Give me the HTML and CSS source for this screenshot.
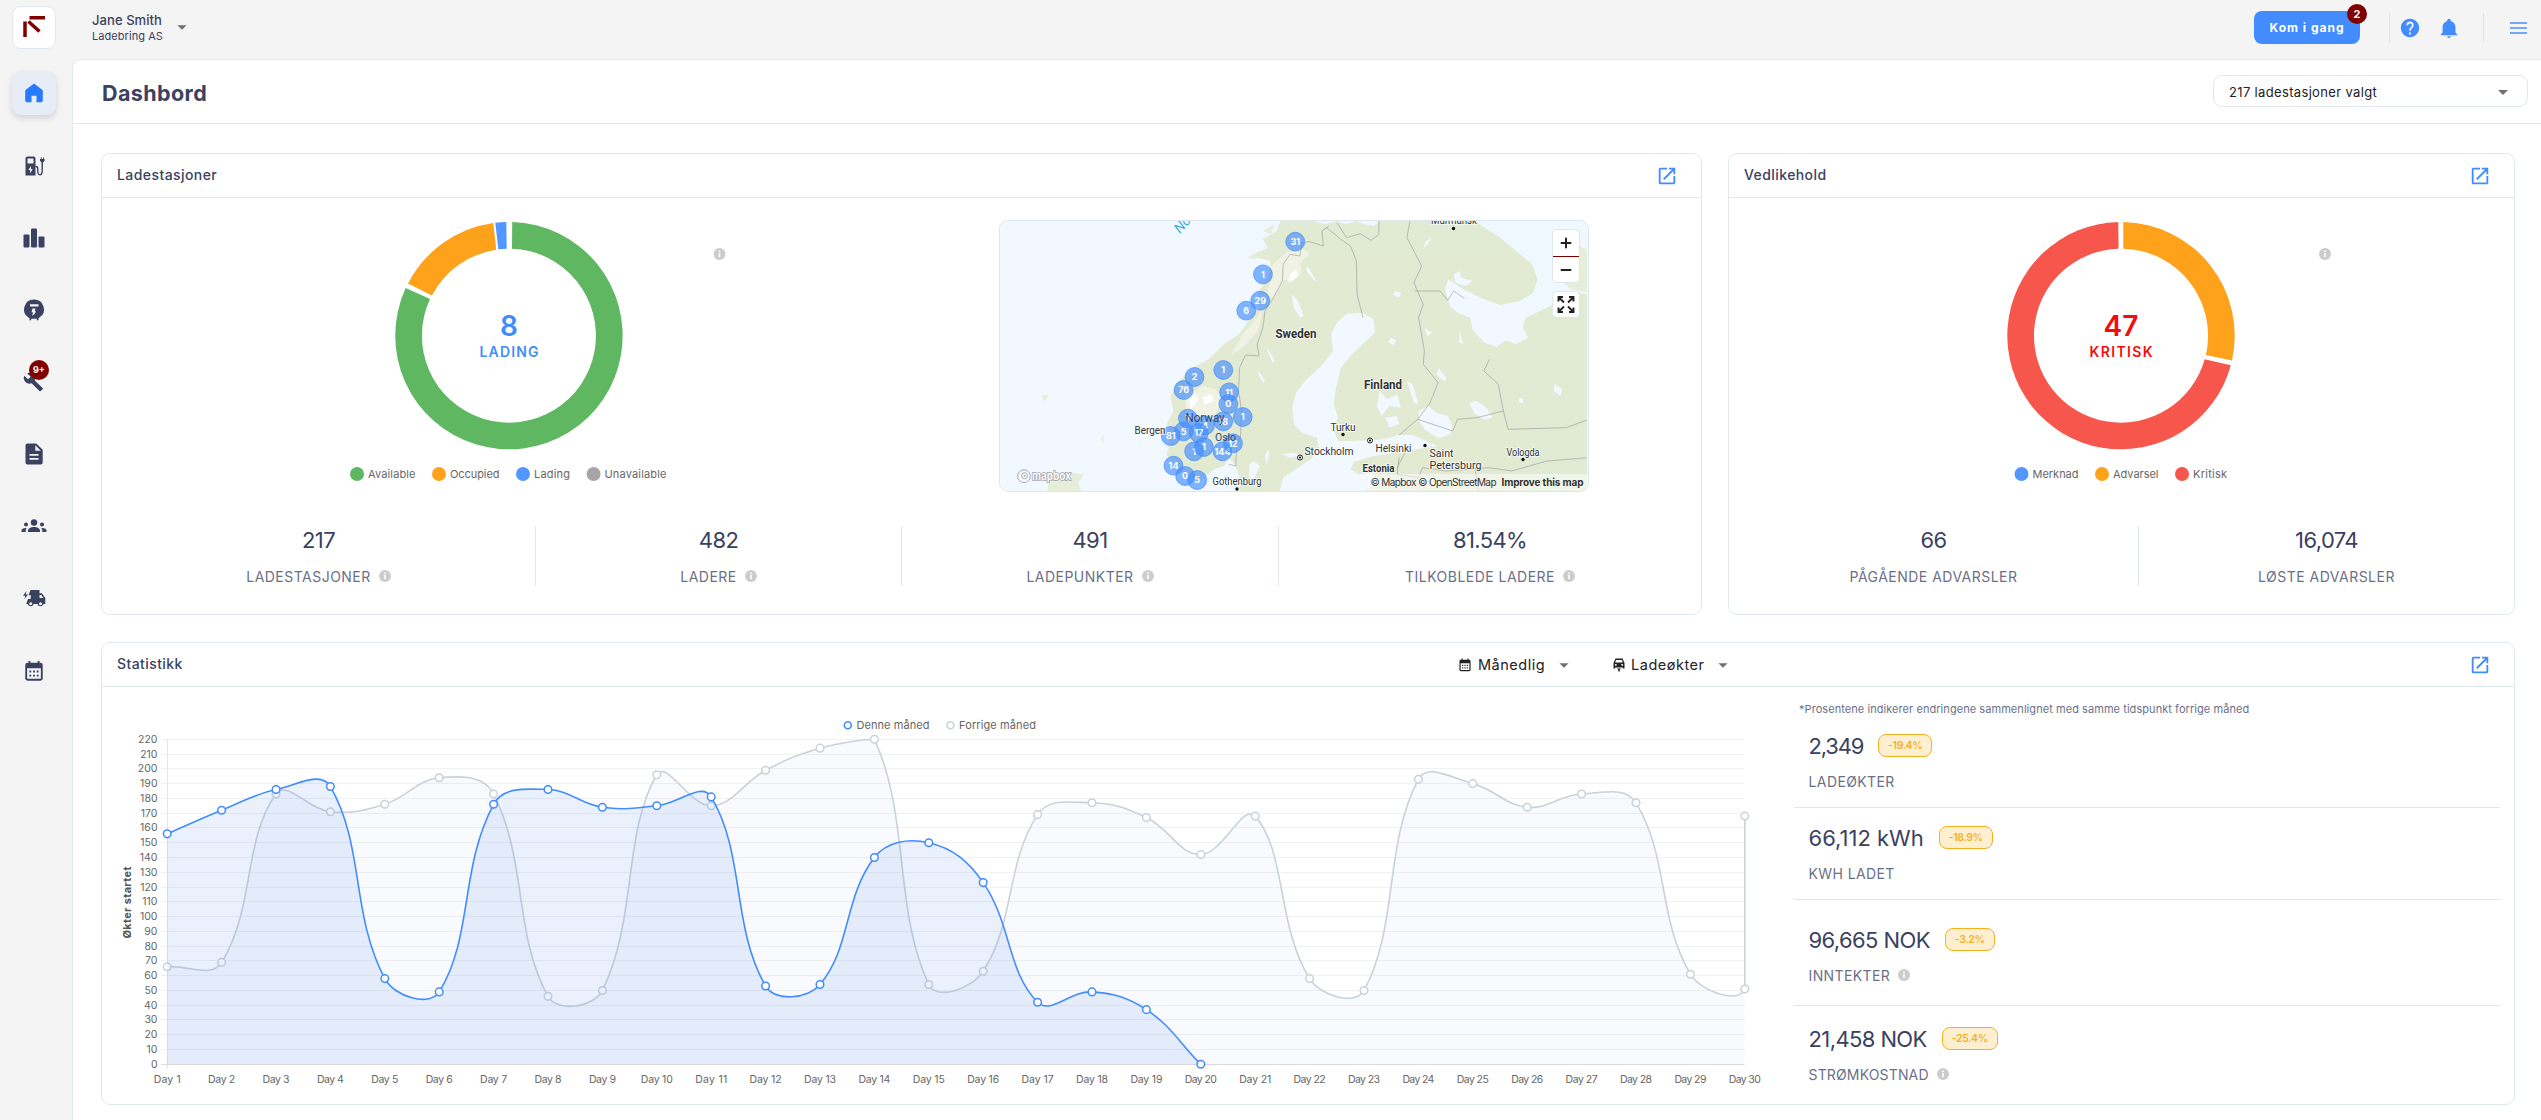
FILE: index.html
```html
<!DOCTYPE html>
<html lang="no">
<head>
<meta charset="utf-8">
<title>Dashbord</title>
<link rel="stylesheet" href="styles.css">
</head>
<body>
<svg class="defs" aria-hidden="true">
  <symbol id="i-caret" viewBox="0 0 24 24"><path d="M7 10l5 5 5-5z"/></symbol>
  <symbol id="i-open" viewBox="0 0 24 24"><path d="M19 19H5V5h7V3H5a2 2 0 0 0-2 2v14a2 2 0 0 0 2 2h14c1.100 0 2-.9 2-2v-7h-2v7zM14 3v2h3.590l-9.830 9.830 1.410 1.410L19 6.410V10h2V3h-7z"/></symbol>
  <symbol id="i-info" viewBox="0 0 12 12"><circle cx="6" cy="6" r="6"/><path d="M5.200 2.500h1.600v1.500H5.200zM5.200 5h1.600v4.300H5.200z" fill="#fff"/></symbol>
  <symbol id="i-cal" viewBox="0 0 24 24"><path fill-rule="evenodd" d="M6 1h2v2h8V1h2v2h1a2.500 2.500 0 0 1 2.500 2.500v14A2.500 2.500 0 0 1 19 22.500H5A2.500 2.500 0 0 1 2.500 19.500v-14A2.500 2.500 0 0 1 5 3h1zM4.500 9v10.500c0 .6.4 1 1 1h13c.6 0 1-.4 1-1V9zM7 11.500h2v2H7zm4 0h2v2h-2zm4 0h2v2h-2zM7 16h2v2H7zm4 0h2v2h-2zm4 0h2v2h-2z"/></symbol>
</svg>
<div class="app">
  <aside class="side">
    <div class="logo"><svg width="24" height="24" viewBox="0 0 24 24"><path d="M7.500 2.800H23M3 6.500V22M6.500 6.500l11 10" stroke="#800000" stroke-width="3.500" fill="none"/></svg></div>
    <nav class="nav">
      <a class="nav-item active"><svg width="24" height="24" viewBox="0 0 24 24"><path d="M12 2.500l8.500 6.400a1 1 0 0 1 .3.800V19.500a1.700 1.700 0 0 1-1.700 1.700H14.500v-6.500h-5v6.500H4.900a1.700 1.700 0 0 1-1.700-1.700V9.700a1 1 0 0 1 .3-.8z"/></svg></a>
      <a class="nav-item"><svg width="24" height="24" viewBox="0 -1 24 24"><path fill-rule="evenodd" d="M5.500 2.500h6A2 2 0 0 1 13.500 4.500V21.500H3.500v-17a2 2 0 0 1 2-2zM5.500 4.500v5h6v-5zM9 12l-2.700 4h1.700v3.500l2.700-4.500H9z"/><path d="M13.500 12.500c2.300 0 2.300 1 2.300 4 0 3 .2 4.200 2.200 4.200s2.200-1.200 2.200-4V8" fill="none" stroke="currentColor" stroke-width="1.400"/><path d="M18 5h.8V3.200h.8V5h1.400V3.200h.8V5h.8v1.800l-1.200 1.400h-2.200l-1.200-1.400z"/></svg></a>
      <a class="nav-item"><svg width="24" height="24" viewBox="0 -1 24 24"><rect x="1.500" y="8.500" width="6" height="13" rx="1"/><rect x="9" y="2.500" width="6" height="19" rx="1"/><rect x="16.500" y="10.500" width="6" height="11" rx="1"/></svg></a>
      <a class="nav-item"><svg width="24" height="24" viewBox="0 0 24 24"><path fill-rule="evenodd" d="M12 1.500a9.800 9.800 0 0 1 5.500 18l-1 .8v2h-1.700v-1.500H9.200v1.500H7.500v-2l-1-.8a9.800 9.800 0 0 1 5.500-18zM8 6.300v2.300h8.500V6.300zM10.500 10.500l-1 3.800h1.500l-.8 3.500c2.500-1.300 3.300-2.700 3.500-4.700h-1l.9-2.600z"/></svg></a>
      <a class="nav-item"><svg width="24" height="24" viewBox="0 0 24 24"><path d="M20.800 18.200l-8-7.800c.8-2.200.3-4.500-1.300-6.100C9.700 2.600 7.200 2.300 5 3.200l3.700 3.600L6 9.300 2.300 5.800C1.300 7.800 1.700 10.400 3.500 12c1.600 1.700 4 2.100 6.100 1.300l7.800 7.700c.4.4 1 .4 1.300 0l2-2c.4-.3.4-.9.100-.8z"/></svg><span class="badge badge-side">9+</span></a>
      <a class="nav-item"><svg width="24" height="24" viewBox="0 0 24 24"><path fill-rule="evenodd" d="M5.500 1.500h8.700l6.500 6.300V20.500a2 2 0 0 1-2 2H5.500a2 2 0 0 1-2-2v-17a2 2 0 0 1 2-2zM13.300 3.300v5.400h5.500zM7.500 12v1.700h9V12zm0 4v1.700h9V16z"/></svg></a>
      <a class="nav-item"><svg width="26" height="24" viewBox="0 0 26 24"><circle cx="13" cy="8.500" r="3.200"/><path d="M7 18v-1.500c0-2 3-3.600 6-3.600s6 1.600 6 3.600V18zM5 8.500a2 2 0 1 1 0 4 2 2 0 0 1 0-4zM21 8.500a2 2 0 1 1 0 4 2 2 0 0 1 0-4zM.5 18v-1.500c0-1.500 2-2.800 5.200-2.500-.7.800-1 1.600-1 2.500V18zM25.500 18v-1.500c0-1.500-2-2.800-5.200-2.500.7.800 1 1.600 1 2.500V18z"/></svg></a>
      <a class="nav-item"><svg width="24" height="24" viewBox="0 0 24 24"><path fill-rule="evenodd" d="M8.500 4h9v3.200h2.300L23.300 12v6h-2a2.900 2.900 0 0 1-5.700 0h-4a2.900 2.900 0 0 1-5.700 0H4.200L6 13h2.500L9 9.200H6.500zM17.500 9v3h4l-2.300-3zM8.700 16.300a1.500 1.500 0 1 0 .01 0zM18.500 16.300a1.500 1.500 0 1 0 .01 0z"/><path d="M4.500 5L1 9.800h2.200L2.500 13 6 8.500H3.900z"/></svg></a>
      <a class="nav-item"><svg width="22" height="22"><use href="#i-cal"/></svg></a>
    </nav>
  </aside>
  <div class="right">
    <header class="top">
      <div class="user">
        <div class="user-text"><span class="user-name">Jane Smith</span><span class="user-org">Ladebring AS</span></div>
        <svg class="caret" width="22" height="22"><use href="#i-caret"/></svg>
      </div>
      <div class="actions">
        <button class="start">Kom i gang<span class="badge badge-start">2</span></button>
        <i class="vline vline-a"></i>
        <svg class="help" width="22" height="22" viewBox="0 0 24 24"><path d="M12 2C6.480 2 2 6.480 2 12s4.480 10 10 10 10-4.480 10-10S17.520 2 12 2zm1 17h-2v-2h2v2zm2.070-7.750l-.9.920C13.450 12.900 13 13.500 13 15h-2v-.5c0-1.100.45-2.100 1.170-2.830l1.240-1.260c.37-.36.590-.86.590-1.410 0-1.100-.9-2-2-2s-2 .9-2 2H8c0-2.210 1.790-4 4-4s4 1.790 4 4c0 .88-.36 1.680-.93 2.250z"/></svg>
        <svg class="bell" width="22" height="22" viewBox="0 0 24 24"><path d="M21 19v1H3v-1l2-2v-6c0-3.100 2.030-5.830 5-6.710V4a2 2 0 0 1 4 0v.29c2.970.88 5 3.610 5 6.710v6l2 2m-7 2a2 2 0 0 1-4 0"/></svg>
        <i class="vline vline-b"></i>
        <svg class="burger" width="17" height="12" viewBox="0 0 17 12"><path d="M0 1h17M0 6h17M0 11h17" stroke="#4b8df8" stroke-width="1.700"/></svg>
      </div>
    </header>
    <main class="main">
      <div class="title-bar">
        <h1 class="title">Dashbord</h1>
        <div class="select"><span>217 ladestasjoner valgt</span><svg class="caret" width="24" height="24"><use href="#i-caret"/></svg></div>
      </div>
      <div class="content">
        <section class="card card-stations">
          <div class="card-head"><h2>Ladestasjoner</h2><svg class="open" width="22" height="22"><use href="#i-open"/></svg></div>
          <div class="visuals">
            <svg class="donut" width="440" height="292" viewBox="-220 -137.700 440 292">
              <path fill="#5fb762" d="M3.200-113.700A113.700 113.700 0 1 1-103.300-47.700L-79-36.700A87 87 0 1 0 3-87z"/>
              <path fill="#ffa21b" d="M-101-52.200A113.700 113.700 0 0 1-15.700-112.700L-12.700-86A87 87 0 0 0-77-40.300z"/>
              <path fill="#5297ff" d="M-13.700-112.900A113.700 113.700 0 0 1-2.700-113.700L-2.300-87A87 87 0 0 0-10.700-86.400z"/>
              <g fill="#3f8cff" text-anchor="middle"><text y=".5" class="donut-num">8</text><text y="21.500" class="donut-label" textLength="59">LADING</text></g>
              <g class="legend"><circle cx="-152" cy="138.300" r="7" fill="#5fb762"/><text x="-141" y="142" textLength="47.500">Available</text><circle cx="-70" cy="138.300" r="7" fill="#ffa21b"/><text x="-59" y="142" textLength="49.500">Occupied</text><circle cx="14" cy="138.300" r="7" fill="#5297ff"/><text x="25" y="142" textLength="36">Lading</text><circle cx="84.600" cy="138.300" r="7" fill="#a6a6a6"/><text x="95.500" y="142" textLength="62">Unavailable</text></g>
              <use href="#i-info" x="204.500" y="-87.700" width="12" height="12" fill="#ccc"/>
            </svg>
            <div class="map">
              <svg id="map" width="587" height="270" viewBox="0 0 587 270"></svg>
            </div>
          </div>
          <div class="stats">
            <div class="stat s1"><b>217</b><span class="lbl">LADESTASJONER<svg class="info"><use href="#i-info"/></svg></span></div>
            <div class="stat s2"><b>482</b><span class="lbl">LADERE<svg class="info"><use href="#i-info"/></svg></span></div>
            <div class="stat s3"><b>491</b><span class="lbl">LADEPUNKTER<svg class="info"><use href="#i-info"/></svg></span></div>
            <div class="stat s4"><b>81.54%</b><span class="lbl">TILKOBLEDE LADERE<svg class="info"><use href="#i-info"/></svg></span></div>
          </div>
        </section>
        <section class="card card-service">
          <div class="card-head"><h2>Vedlikehold</h2><svg class="open" width="22" height="22"><use href="#i-open"/></svg></div>
          <div class="visuals visuals-one">
            <svg class="donut" width="440" height="292" viewBox="-220 -137.700 440 292">
              <path fill="#ffa21b" d="M2.300-113.700A113.700 113.700 0 0 1 111 24.700L84.900 19.300A87 87 0 0 0 2.300-87z"/>
              <path fill="#f7564c" d="M109.800 29.600A113.700 113.700 0 1 1-2.700-113.700L-2.500-87A87 87 0 1 0 83.700 23.600z"/>
              <g fill="#f50c0c" text-anchor="middle"><text y=".5" class="donut-num">47</text><text y="21.500" class="donut-label" textLength="63">KRITISK</text></g>
              <g class="legend"><circle cx="-99.500" cy="138.300" r="7" fill="#5297ff"/><text x="-88.500" y="142" textLength="46">Merknad</text><circle cx="-19" cy="138.300" r="7" fill="#ffa21b"/><text x="-8" y="142" textLength="45.500">Advarsel</text><circle cx="61" cy="138.300" r="7" fill="#f7564c"/><text x="72" y="142" textLength="34">Kritisk</text></g>
              <use href="#i-info" x="198" y="-87.700" width="12" height="12" fill="#ccc"/>
            </svg>
          </div>
          <div class="stats">
            <div class="stat s5"><b>66</b><span class="lbl">PÅGÅENDE ADVARSLER</span></div>
            <div class="stat s6"><b>16,074</b><span class="lbl">LØSTE ADVARSLER</span></div>
          </div>
        </section>
        <section class="card card-stat">
          <div class="card-head">
            <h2>Statistikk</h2>
            <div class="filters">
              <span class="filter"><svg class="f-icon" width="14" height="14"><use href="#i-cal"/></svg><span>Månedlig</span><svg class="caret" width="22" height="22"><use href="#i-caret"/></svg></span>
              <span class="filter"><svg class="f-icon" width="12" height="14" viewBox="0 0 12 14"><path fill-rule="evenodd" d="M2.500.5h7l2 4.500v5.500h-1.700V9.500H2.200v1H.5V5zM3 2L2.200 4.500h7.600L9 2zM2.800 6a.9.900 0 1 0 .01 0zM9.200 6a.9.900 0 1 0 .01 0z"/><path d="M4 10.500h4l-1.300 1.500v1.500H5.300V12z"/></svg><span>Ladeøkter</span><svg class="caret" width="22" height="22"><use href="#i-caret"/></svg></span>
            </div>
            <svg class="open" width="22" height="22"><use href="#i-open"/></svg>
          </div>
          <div class="stat-body">
            <svg id="chart" width="1692" height="416" viewBox="102 687 1692 416"></svg>
            <div class="kpis">
              <p class="note">*Prosentene indikerer endringene sammenlignet med samme tidspunkt forrige måned</p>
              <div class="kpi k1"><div class="kpi-top"><b>2,349</b><em>-19.4%</em></div><span class="lbl">LADEØKTER</span></div>
              <div class="kpi k2"><div class="kpi-top"><b>66,112 kWh</b><em>-18.9%</em></div><span class="lbl">KWH LADET</span></div>
              <div class="kpi k3"><div class="kpi-top"><b>96,665 NOK</b><em>-3.2%</em></div><span class="lbl">INNTEKTER<svg class="info"><use href="#i-info"/></svg></span></div>
              <div class="kpi k4"><div class="kpi-top"><b>21,458 NOK</b><em>-25.4%</em></div><span class="lbl">STRØMKOSTNAD<svg class="info"><use href="#i-info"/></svg></span></div>
            </div>
          </div>
        </section>
      </div>
    </main>
  </div>
</div>
<script src="app.js"></script>
</body>
</html>
```
FILE: styles.css
```css
* { box-sizing: border-box; }
body { margin: 0; background: #f4f4f4; font-family: Inter, "Noto Sans", sans-serif; color: #3b4160; width: 2541px; height: 1120px; overflow: hidden; }
h1, h2, p, b, em, button { margin: 0; font-weight: inherit; font-style: normal; font-family: inherit; }
svg { display: block; flex: none; }
.defs { position: absolute; width: 0; height: 0; }
.app { display: flex; height: 1120px; }
.side { width: 72px; flex: none; padding: 6px 0 0 12px; }
.logo { width: 44px; height: 43px; background: #fff; border: 1px solid #e2e8f0; border-radius: 9px; display: flex; align-items: center; justify-content: center; }
.logo svg { margin-top: -2px; }
.nav { margin-top: 22px; display: flex; flex-direction: column; gap: 28.200px; }
.nav-item { width: 44px; height: 44px; border-radius: 9px; display: flex; align-items: center; justify-content: center; color: #3b4160; fill: currentColor; position: relative; }
.nav-item.active { background: #e6edf7; color: #2979ff; box-shadow: 0 3px 6px rgba(0,0,0,.14); }
.badge { position: absolute; width: 20px; height: 20px; border-radius: 50%; background: #800000; color: #fff; font-weight: 700; text-align: center; line-height: 20px; letter-spacing: 0; }
.badge-side { left: 17px; top: 0; font-size: 9px; }
.badge-start { left: 93px; top: -7px; font-size: 11px; }
.right { flex: 1; display: flex; flex-direction: column; min-width: 0; }
.top { height: 59px; flex: none; display: flex; justify-content: space-between; }
.user { display: flex; padding: 11px 0 0 20px; }
.user-text { display: flex; flex-direction: column; width: 79px; white-space: nowrap; }
.user-name { font-size: 13px; font-weight: 500; line-height: 18px; letter-spacing: .07px; }
.user-org { font-size: 11px; line-height: 14px; letter-spacing: .06px; }
.user .caret { margin-top: 5px; }
.caret { fill: #707070; }
.actions { display: flex; align-items: center; height: 55px; padding-right: 14px; }
.start { position: relative; width: 106px; height: 33px; border: 0; border-radius: 8px; background: #428cff; color: #fff; font-size: 12px; font-weight: 700; padding: 0; letter-spacing: 1px; }
.vline { width: 1px; height: 29px; background: #dfe3ee; }
.vline-a { margin-left: 29px; margin-right: 9px; }
.vline-b { margin-left: 23px; margin-right: 26px; }
.help, .bell { fill: #428cff; }
.bell { margin-left: 17px; }
.main { flex: 1; background: #fff; border: 1px solid #e2e8f0; border-width: 1px 0 0 1px; border-top-left-radius: 9px; }
.title-bar { height: 64px; border-bottom: 1px solid #e2e8f0; display: flex; align-items: center; justify-content: space-between; padding: 0 13px 0 29px; }
.title { font-size: 21.500px; font-weight: 700; line-height: 30px; margin-top: 2px; letter-spacing: .4px; }
.select { width: 315px; height: 32px; border: 1px solid #e2e8f0; border-radius: 9px; padding: 4px 12px 0 15px; margin-top: -1px; display: flex; justify-content: space-between; font-size: 13px; line-height: 25px; letter-spacing: .34px; color: #222; }
.content { padding: 29px 26px 0 28px; display: grid; grid-template-columns: 1601px 787px; gap: 27px 26px; grid-template-rows: 462px 463px; }
.card { border: 1px solid #e2e8f0; border-radius: 9px; }
.card-stat { grid-column: 1 / 3; }
.card-head { height: 44px; border-bottom: 1px solid #e2e8f0; padding: 0 23px 0 15px; display: flex; align-items: center; justify-content: space-between; }
.card-head h2 { font-size: 14px; font-weight: 500; line-height: 20px; letter-spacing: .42px; margin-top: -1px; }
.open { fill: #428cff; }
.visuals { height: 292px; padding-left: 187px; display: flex; gap: 270px; }
.visuals-one { padding-left: 172px; }
.donut-num { font-size: 28px; font-weight: 600; }
.donut-label { font-size: 14px; font-weight: 600; }
.legend { font-size: 11px; fill: #666; }
.map { margin-top: 22px; width: 590px; height: 272px; border: 1px solid #dde5ee; border-radius: 9px; overflow: hidden; background: #f1f8ff; }
.stats { display: flex; margin-top: 36px; height: 60px; }
.stat { display: flex; flex-direction: column; align-items: center; border-right: 1px solid #e2e8f0; }
.stat:last-child { border-right: 0; }
.s1 { width: 434px; } .s2 { width: 366px; } .s3 { width: 377px; } .s4 { width: 422px; } .s5 { width: 410px; } .s6 { width: 375px; }
.stat b, .kpi b { font-size: 22px; line-height: 28px; letter-spacing: -.6px; }
.lbl { margin-top: 13px; font-size: 14px; line-height: 20px; letter-spacing: .48px; color: #6b7088; display: flex; }
.info { width: 12px; height: 12px; fill: #ccc; margin: 3px 0 0 8px; }
.filters { display: flex; gap: 38px; margin-left: 1274px; color: #222; font-size: 14.500px; letter-spacing: .5px; }
.card-stat .card-head { justify-content: flex-start; }
.card-stat h2 { width: 67px; }
.card-stat .open { margin-left: auto; }
.filter { display: flex; align-items: center; }
.f-icon { margin-right: 6px; fill: #222; }
.filter .caret { margin-left: 8px; }
.stat-body { display: flex; }
.kpis { width: 706px; }
.note { font-size: 11px; line-height: 16px; letter-spacing: .06px; color: #6b7088; padding-left: 5px; margin-top: 14px; white-space: nowrap; }
.kpi { padding-left: 14.500px; border-bottom: 1px solid #e2e8f0; }
.kpi:last-child { border-bottom: 0; }
.kpi-top { display: flex; gap: 15px; align-items: flex-start; }
.kpi .lbl { margin-top: 12px; }
.kpi .lbl { letter-spacing: .4px; }
.k1 b { letter-spacing: -1.200px; } .k2 b { letter-spacing: 0; }
.kpi em { border: 1px solid #f5b01f; background: #fdefd0; color: #f5b01f; border-radius: 8px; height: 23px; margin-top: 2px; padding: 0 9px; font-size: 10.500px; line-height: 21px; letter-spacing: -.4px; font-weight: 600; }
.k1 { padding-top: 15px; height: 91px; } .k2 { padding-top: 16px; height: 92px; } .k3 { padding-top: 26px; height: 106px; } .k4 { padding-top: 19px; }
.k4 .lbl { letter-spacing: .15px; }
.ylab, .xlab { font-size: 10.500px; fill: #666; }
```
FILE: app.js
```js
// Line chart
const cur = [156,172,186,188,58,49,176,186,174,175,181,53,54,140,150,123,42,49,37,0];
const prev = [66,69,183,171,176,194,183,46,50,196,175,199,214,220,54,63,169,177,167,142,168,58,50,193,190,174,183,177,61,51,168];
const X0 = 167.2, DX = 54.4, Y0 = 1064.3, DY = 1.4773;
const pts = a => a.map((v, i) => ({ x: X0 + DX * Math.min(i, 29), y: Y0 - DY * v }));
const clamp = y => Math.max(Y0 - 220 * DY, Math.min(Y0, y));
function spline(p) {
  const c = p.map((q, i) => {
    const a = p[Math.max(0, i - 1)], b = p[Math.min(p.length - 1, i + 1)];
    const d1 = Math.hypot(q.x - a.x, q.y - a.y), d2 = Math.hypot(b.x - q.x, b.y - q.y);
    const f1 = 0.4 * d1 / (d1 + d2), f2 = 0.4 * d2 / (d1 + d2);
    return { ax: q.x - f1 * (b.x - a.x), ay: clamp(q.y - f1 * (b.y - a.y)), bx: Math.min(X0 + 29 * DX, q.x + f2 * (b.x - a.x)), by: clamp(q.y + f2 * (b.y - a.y)) };
  });
  let d = `M${p[0].x} ${p[0].y}`;
  for (let i = 1; i < p.length; i++) d += `C${c[i-1].bx} ${c[i-1].by} ${c[i].ax} ${c[i].ay} ${p[i].x} ${p[i].y}`;
  return d;
}
let h = '';
for (let v = 0; v <= 220; v += 10) {
  const y = Math.round(Y0 - DY * v - 0.5) + 0.5;
  h += `<path d="M161 ${y}H1744.500" stroke="${v ? '#f0f1f2' : '#dcdcdc'}"/>`;
  h += `<text class="ylab" x="157.500" y="${y + 3.5}" text-anchor="end">${v}</text>`;
}
h += '<path d="M167.500 739V1069" stroke="#e5e5e5"/>';
for (let i = 0; i < 30; i++) h += `<text class="xlab" x="${X0 + DX * i}" y="1083" text-anchor="middle" textLength="${i < 9 ? 27 : 32}">Day ${i + 1}</text>`;
h += '<text transform="translate(130.500 902.500) rotate(-90)" text-anchor="middle" font-size="11" font-weight="700" fill="#555" textLength="72">Økter startet</text>';
for (const [a, col, fill] of [[prev, '#c9d2da', 'rgba(203,213,235,.11)'], [cur, '#428cff', 'rgba(66,130,240,.11)']]) {
  const p = pts(a), d = spline(p);
  const dots = p.map(q => `<circle cx="${q.x}" cy="${q.y}" r="3.800" fill="#fff" stroke="${col}" stroke-width="1.500"/>`).join('');
  h += `<path d="${d}V${Y0}H${X0}Z" fill="${fill}"/><path d="${d}" fill="none" stroke="${col}" stroke-width="1.600"/>${dots}`;
}
h += '<g class="legend"><circle cx="847.800" cy="725.300" r="3.500" fill="#fff" stroke="#428cff" stroke-width="1.600"/><text x="856.500" y="729" textLength="73">Denne måned</text><circle cx="950.400" cy="725.300" r="3.500" fill="#fff" stroke="#c9d2da" stroke-width="1.600"/><text x="959" y="729" textLength="77">Forrige måned</text></g>';
document.getElementById('chart').innerHTML = h;

// Map
const land = 'M745 30L735 60 700 85 712 110 668 135 720 150 712 200 690 240 690 290 662 330 640 368 600 400 560 445 520 470 475 520 462 560 470 600 452 640 460 700 452 730 480 775 510 800 545 805 575 775 600 765 612 740 628 760 640 800 640 845H742L752 800 790 770 822 745 845 715 838 680 800 665 780 640 775 590 785 545 812 505 850 465 880 420 875 370 890 335 915 308 955 306 985 325 988 365 960 395 925 435 900 470 888 530 882 580 893 620 880 650 893 690 935 690 1010 685 1050 672 1085 672 1118 690 1150 705 1110 712 1060 722 985 735 935 752 925 775 945 790 985 785 990 815 960 845H1538V250L1500 245 1470 265 1430 290 1375 320 1368 350 1382 380 1350 400 1325 388 1300 408 1270 395 1240 360 1232 320 1200 305 1180 285 1168 235 1176 205 1215 235 1262 262 1310 282 1360 270 1395 245 1406 205 1392 160 1350 120 1310 80 1275 55 1245 30H1000L985 45 960 40 940 30 915 40 890 30 860 40 830 30Z';
const borders = 'M870 45L852 60 855 105 820 92 800 95 795 135 770 130 752 160 750 210 722 270 705 300 700 350 685 400 690 435 655 432 640 470 637 540 645 600 642 680 632 700 630 765 612 760M862 48L900 85 925 105 940 150 942 250 957 320M890 35L915 80 950 68 978 88 998 70V30M1078 30L1070 80 1108 165 1088 215 1112 280 1100 320 1115 420 1112 460 1150 515 1130 575 1098 625 1050 672M1090 240H1155L1175 268 1190 240 1218 262M1282 445L1268 480 1305 520 1318 600 1250 620 1200 625 1188 660 1098 625M1318 600L1330 655 1480 650 1538 625M1050 740L1045 790 1100 800 1110 770 1170 780 1280 770 1340 780 1430 750 1538 740M1245 770L1255 845M1065 725L1045 770';
const lakes = 'M1100 600l25-15 20 20 30 10 12 30-5 25-30 12-35-25-15-25zM1230 575l20-5 25 20 15 30-20 5-25-15zM775 250l15 20 15 45-10 5-18-35zM690 480l15 30-5 5-12-25zM712 410l18 40-5 5-12-30zM815 165l25 50-12-12-18-25zM1000 540l20 25 25-15 10 40-30-5-20 30-12-30zM1015 620l30-5 5 25-25 10zM1070 510l15 10 15 60-12-5zM1190 190l15-10 5 20 30 10-20 15-25-10zM1135 80l-25 40 8-30zM1040 240l15 5-5 15-15-8zM1150 470l22 30-5 12-20-20zM665 760l12-10 15 15-20 50-8-20zM705 735l8-20 4 15-8 30zM1450 520l20 15-5 20-18-15zM1205 360l10 40-10-5zM1115 350l20 15-12 12zM1028 380l15 8-8 14-12-8zM1360 560l10 5-3 12-10-5zM750 730l30-5 20 8-30 8z';
const snow = 'M720 165l40-40 40-15 20 20-25 25 5 30-25 30-20-10-30 60-15-20 15-50zM700 290l-12 70-40 50-30 20 30-60 30-40zM500 560l45-35 35 10 15 35-20 45-30 25-40-15z';
let m = `<rect width="587" height="270" fill="#f1f8ff"/><g transform="scale(.389 .3333) translate(-24 -30)">
<path d="${land}" fill="#e2ead2"/><path d="M1500 95L1538 120V245L1490 235 1475 215 1440 200 1480 170zM150 810l50-25 40 5-15 25 10 30h-90zM130 555l18-5-8 22zM282 680l10-8-3 25zM700 60l30-20-10 30zM660 140l30-20-8 25z" fill="#e6edd9"/>
<path d="${snow}" fill="#f0f2e4"/><path d="M770 190l15-15 5 20-25 20zM510 570l15-20 10 15-20 30zM545 560l20-10 10 20-25 10z" fill="#fff"/>
<path d="${lakes}" fill="#f1f8ff"/>
<path d="${borders}" fill="none" stroke="#9a9da3" stroke-width=".8" vector-effect="non-scaling-stroke" opacity=".8"/></g>`;
const clusters = [[31,784,93],[1,701,191],[29,694,270],[6,658,300],[1,599,478],[2,525,499],[76,497,538],[11,614,545],[0,612,580],[1,649,619],[7,508,624],[4,552,644],[18,599,632],[5,497,662],[81,464,676],[17,536,667],[144,597,722],[12,624,698],[1,524,722],[1,549,709],[14,471,765],[0,501,796],[5,532,808]];
for (const [n, zx, zy] of clusters) {
  const x = (zx - 25) * .389, y = (zy - 31) / 3;
  m += `<circle cx="${x}" cy="${y}" r="9.400" fill="#428cff" fill-opacity=".65" stroke="#428cff" stroke-opacity=".7"/><text x="${x}" y="${y + 3.2}" text-anchor="middle" fill="#fff" font-weight="700" font-size="9">${n}</text>`;
}
const places = [['Sweden',276,117.7,41,1],['Finland',364.5,168,38,1],['Norway',186,201.6,39,0],['Bergen',135,213,31,0],['Oslo',215.5,220,21,0],['Turku',331,210,25,0],['Helsinki',376,231.7,36,0],['Stockholm',305,234,49,0],['Saint',430,236,24,0],['Petersburg',430,248,52,0],['Vologda',507,235,33,0],['Estonia',363,251.7,32,1],['Gothenburg',213,264,49,0],['Murmansk',431.5,3.5,46,0]];
for (const [t, x, y, w, b] of places) m += `<text x="${x - .5}" y="${y - .5}" textLength="${w}" lengthAdjust="spacingAndGlyphs" font-family="Roboto, sans-serif" font-size="${t === 'Sweden' || t === 'Finland' || t === 'Norway' ? 12 : 10.5}" font-weight="${b ? 700 : 400}" fill="${t === 'Norway' || t === 'Oslo' ? '#2f4a7a' : '#333'}" ${t === 'Norway' || t === 'Oslo' ? '' : 'stroke="#fff" stroke-opacity=".7" stroke-width="2" paint-order="stroke"'}>${t}</text>`;
for (const [x, y] of [[343,213.5],[425,224.5],[523,238.5],[237,268],[453.5,7.5]]) m += `<circle cx="${x}" cy="${y}" r="1.700" fill="#111"/>`;
for (const [x, y] of [[370,219.5],[300,236.5]]) m += `<circle cx="${x}" cy="${y}" r="2.500" fill="#fff" stroke="#222"/><circle cx="${x}" cy="${y}" r="1.100" fill="#111"/>`;
m += `<text transform="translate(180 13) rotate(-48)" font-size="14" font-style="italic" font-family="Roboto, sans-serif" fill="#3bafda">No</text>
<rect x="368" y="253" width="219" height="17" fill="#fff" fill-opacity=".5"/>
<text x="370.500" y="264.500" font-size="10" fill="#333" textLength="126">© Mapbox © OpenStreetMap</text><text x="501.500" y="264.500" font-size="10" font-weight="700" fill="#333" textLength="82">Improve this map</text>
<g fill="#fff" stroke="#9aa3ad" stroke-width="1"><circle cx="24" cy="255.200" r="6.300"/><circle cx="24.500" cy="254.700" r="3"/></g><circle cx="24.500" cy="254.700" r="1" fill="#9aa3ad"/>
<text x="32" y="259" font-size="11.500" font-weight="600" fill="#fff" stroke="#9aa3ad" stroke-width="1.600" paint-order="stroke" textLength="39" lengthAdjust="spacingAndGlyphs">mapbox</text>
<g fill="#fff" stroke="#e0e5ea"><rect x="552.500" y="8.500" width="27" height="53" rx="4"/><rect x="552.500" y="70.500" width="27" height="26" rx="4"/></g>
<path d="M553 35.500H579" stroke="#800000"/><path d="M561.500 22h9M566 17.500v9M561.500 49h9" stroke="#222" stroke-width="2" stroke-linecap="round"/>
<g fill="none" stroke="#222" stroke-width="1.900"><path d="M558.500 80.500V76H563M569 76h4.500v4.500M573.500 86.500V91H569M563 91h-4.500v-4.500M559 76.500l5 5M573 76.500l-5 5M559 90.500l5-5M573 90.500l-5-5"/></g>`;
document.getElementById('map').innerHTML = m;
```
